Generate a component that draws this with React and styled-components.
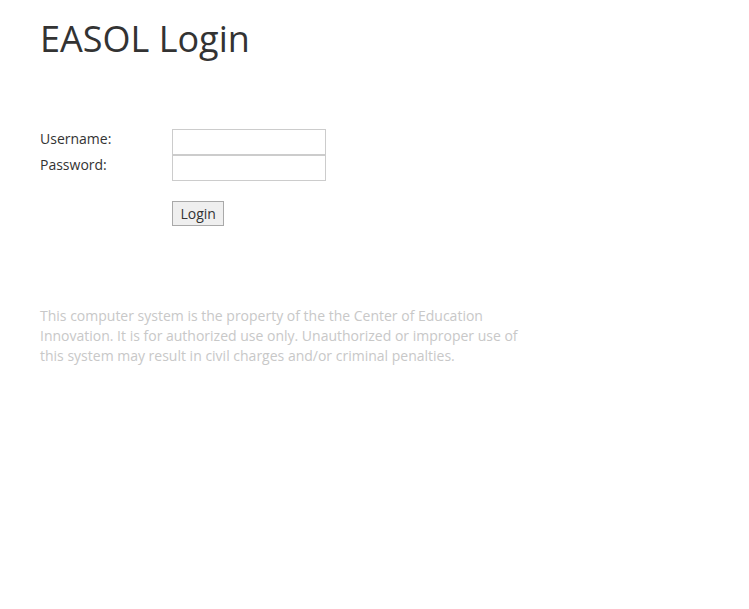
import React from "react";
import styled, { createGlobalStyle } from "styled-components";

const Global = createGlobalStyle`
  html, body { margin: 0; padding: 0; background: #fff; }
  body { font-family: "Open Sans", sans-serif; color: #333; }
`;

const Page = styled.div`
  padding: 14px 40px 0 40px;
`;

const Title = styled.h1`
  margin: 0;
  font-size: 36px;
  font-weight: 400;
  line-height: 50px;
  color: #333;
`;

const Form = styled.form`
  margin-top: 65px;
  display: grid;
  grid-template-columns: 132px 154px;
  align-items: start;
`;

const Label = styled.label`
  font-size: 14px;
  line-height: 20px;
  color: #333;
`;

const Input = styled.input`
  box-sizing: border-box;
  width: 154px;
  height: 26px;
  margin: 0;
  border: 1px solid #ccc;
  background: #fff;
  font-family: "Open Sans", sans-serif;
  font-size: 14px;
  padding: 2px 4px;
  outline: none;
`;

const ButtonCell = styled.div`
  grid-column: 2;
  padding-top: 20px;
`;

const Button = styled.button`
  box-sizing: border-box;
  height: 25px;
  padding: 0 7.5px;
  margin: 0;
  border: 1px solid #a9a9a9;
  border-radius: 0;
  background: #efefef;
  font-family: "Open Sans", sans-serif;
  font-size: 14px;
  color: #333;
  line-height: 21px;
`;

const Disclaimer = styled.p`
  margin: 80px 0 0 0;
  width: 490px;
  font-size: 14px;
  line-height: 20px;
  font-weight: 400;
  color: #c8c8c8;
`;

export default function App() {
  return (
    <>
      <Global />
      <Page>
        <Title>EASOL Login</Title>
        <Form onSubmit={(e) => e.preventDefault()}>
          <Label>Username:</Label>
          <Input type="text" />
          <Label>Password:</Label>
          <Input type="password" />
          <ButtonCell>
            <Button type="submit">Login</Button>
          </ButtonCell>
        </Form>
        <Disclaimer>
          This computer system is the property of the the Center of Education
          Innovation. It is for authorized use only. Unauthorized or improper
          use of this system may result in civil charges and/or criminal
          penalties.
        </Disclaimer>
      </Page>
    </>
  );
}
